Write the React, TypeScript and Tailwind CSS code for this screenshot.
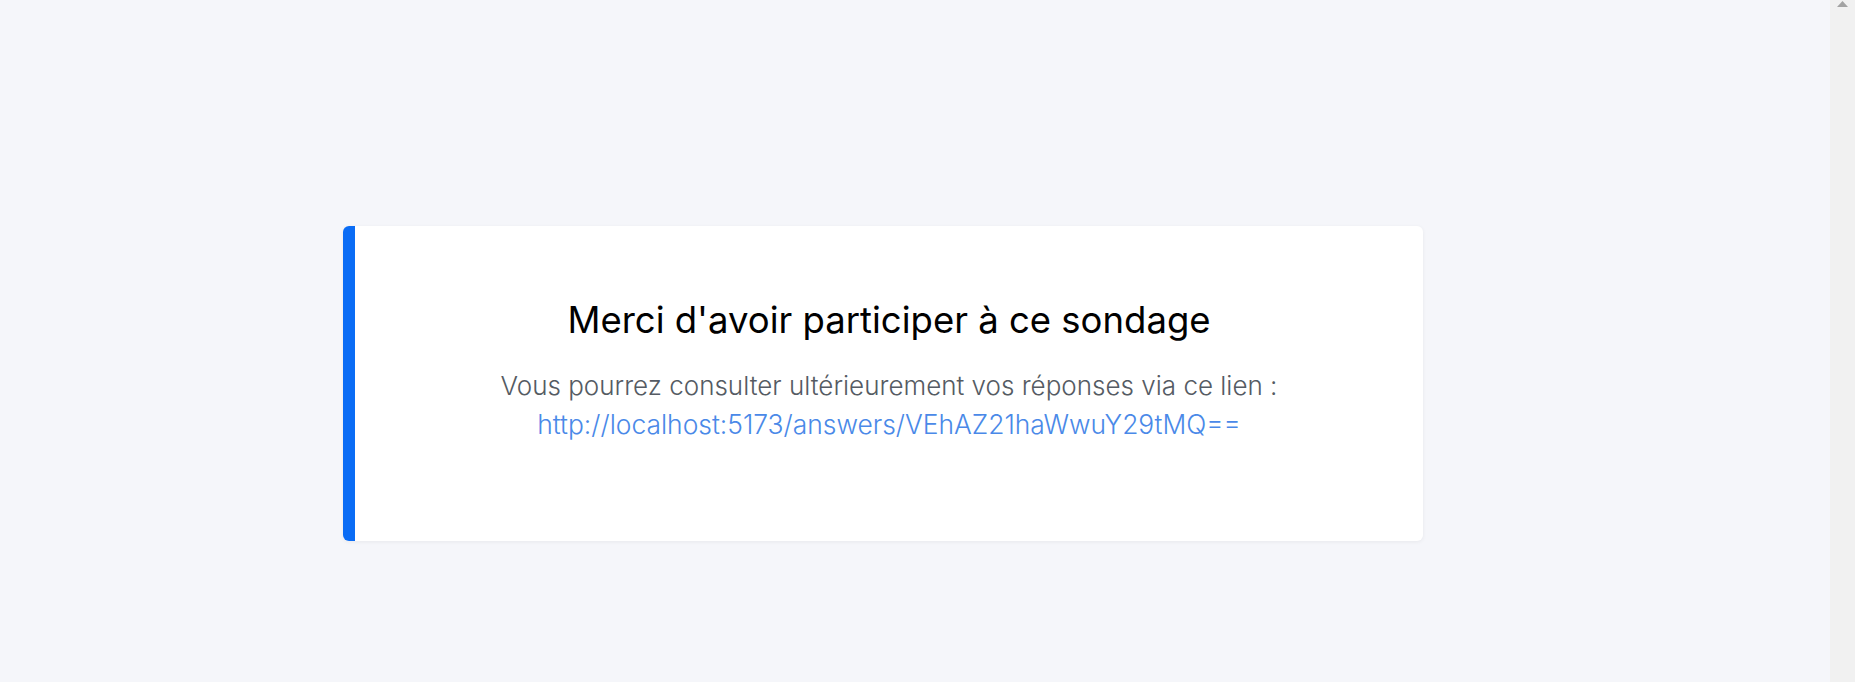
import React from "react";

export default function App() {
  return (
    <div className="flex h-[682px] w-full overflow-hidden bg-[#f5f6fa]" style={{ fontFamily: "Inter, 'Noto Sans', sans-serif" }}>
      <main className="flex-1 pl-[343px] pt-[226px]">
        <div className="flex h-[315px] w-[1080px] overflow-hidden rounded-md bg-white shadow-[0_1px_4px_rgba(0,0,0,0.06)]">
          <div className="w-[12px] shrink-0 bg-[#0a6cf5]" />
          <div className="flex flex-1 flex-col items-center pt-[72px] text-center">
            <h1 className="text-[36.5px] leading-[44px] font-normal text-black">
              Merci d'avoir participer à ce sondage
            </h1>
            <p className="mt-[25px] text-[26px] leading-[38px] font-light text-[#555b63]">
              Vous pourrez consulter ultérieurement vos réponses via ce lien :
              <br />
              <a className="text-[26.4px] text-[#4a89e8]">http://localhost:5173/answers/VEhAZ21haWwuY29tMQ==</a>
            </p>
          </div>
        </div>
      </main>
      <div className="flex w-[25px] shrink-0 flex-col items-center bg-[#f1f1f1]">
        <svg width="11" height="7" viewBox="0 0 11 7" className="mt-[1px]">
          <polygon points="5.5,0 11,6 0,6" fill="#a3a3a3" />
        </svg>
      </div>
    </div>
  );
}
